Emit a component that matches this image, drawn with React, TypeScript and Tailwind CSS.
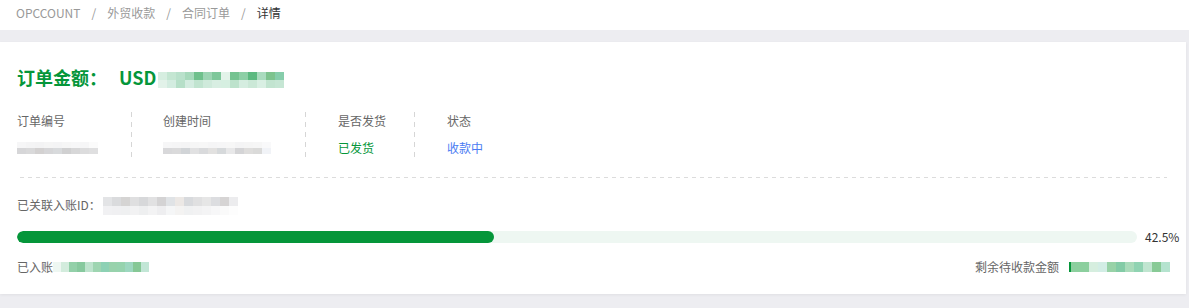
import React from 'react';

const Mosaic = ({ rows, cell = 9, h = 8 }: { rows: string[][]; cell?: number; h?: number }) => {
  return (
    <span className="inline-flex flex-col align-middle">
      {rows.map((row, i) => (
        <span key={i} className="flex">
          {row.map((c, j) => (
            <span key={j} style={{ background: c, width: cell, height: h }} />
          ))}
        </span>
      ))}
    </span>
  );
};

const greenTitle = [
  ['#d6eee0', '#c4e6d2', '#b9e1cb', '#a6d9bb', '#6fc08c', '#9cd4b3', '#7ec79a', '#e3f3e9', '#75c391', '#8dcfa6', '#5cb980', '#a9dbbe', '#7dc38e', '#86cdab'],
  ['#e2f2e9', '#d3ece0', '#b6dfc8', '#d3ece0', '#c1e4d0', '#cfeadb', '#d8eee2', '#d6efe1', '#bde2cc', '#d5ede0', '#cbe8d7', '#d9efe3', '#c2e4d0', '#c6e6d4'],
];

const grayA = [
  ['#f6f6f7', '#f4f4f5', '#f3f3f4', '#f5f5f5', '#f4f4f5', '#f6f6f6', '#f7f7f8', '#f6f6f7', '#fbfbfb'],
  ['#d6d6d8', '#d9d9da', '#d3d1d1', '#d6d6d8', '#d8dadc', '#d0d0d1', '#d7d7d8', '#dcdcdd', '#dfdfe0'],
];

const grayB = [
  ['#f6f6f7', '#f5f5f6', '#f4f4f5', '#f6f6f6', '#f7f7f7', '#f5f5f6', '#f6f6f7', '#f7f7f7', '#f4f4f5', '#f5f5f5', '#f6f6f6', '#f9f9fa'],
  ['#d8d8da', '#dadadb', '#d1d4d7', '#e1e1e2', '#d9dadc', '#e2e1e0', '#d6d9db', '#e8e8e9', '#d4d4d6', '#dedddc', '#dadad9', '#f1f3f7'],
];

const grayId = [
  ['#e3e4e6', '#dadbdd', '#d5d4d3', '#dfdfe0', '#d7d8da', '#e1e1e2', '#d4d3d4', '#e0e3e6', '#ece8e5', '#d8dadd', '#e0e0e1', '#e6e6e6', '#dcdde0', '#d6d4d4', '#ececee'],
  ['#f1f1f3', '#f0f0f2', '#eff0f1', '#f2f2f3', '#eeeff0', '#f3f3f4', '#eeeef0', '#f5f6f7', '#f4f3f2', '#f0f1f2', '#f2f2f3', '#f4f4f5', '#f7f7f8', '#fafafa', '#fdfdfd'],
];

const greenSmall = [
  ['#eef7f2', '#d3ecdd', '#93d0a9', '#87c99e', '#bde3cd', '#9ed5b1', '#8dd1b4', '#98d2ac', '#96d3ae', '#9dd7c0', '#86c896', '#c2e6d6'],
];

const greenRight = [
  ['#8ccf9e', '#8ccf9e', '#d6eedf', '#d2ede5', '#98d2a7', '#83cba6', '#a9dbba', '#90d3b2', '#c0e5d0', '#88ca96', '#b5e3cf'],
];

const vDash = 'w-px bg-[linear-gradient(to_bottom,#d6d6d6_50%,transparent_50%)] bg-[length:1px_10px]';

export default function App() {
  const font = { fontFamily: '"Noto Sans CJK SC", "Noto Sans", sans-serif' };
  return (
    <div className="w-[1189px] h-[308px] bg-[#ededf1] overflow-hidden text-[12px]" style={font}>
      <div className="h-[30px] bg-white flex items-start pt-[5px] pl-[16px] leading-[16px] text-[#999]">
        <span>OPCCOUNT</span>
        <span className="mx-[11px]">/</span>
        <span>外贸收款</span>
        <span className="mx-[11px]">/</span>
        <span>合同订单</span>
        <span className="mx-[11px]">/</span>
        <span className="text-[#333]">详情</span>
      </div>
      <div className="mt-[12px] w-[1186px] h-[252px] bg-white shadow-[0_1px_3px_rgba(0,0,0,0.06)] pt-[23px] pl-[17px] pr-[9px] pb-[18px]">
        <div className="flex items-center text-[18px] leading-[24px] font-bold text-[#05963a]">
          <span>订单金额：</span>
          <span className="ml-[12px]">USD</span>
          <span className="ml-[2px]">
            <Mosaic rows={greenTitle} cell={9} h={8} />
          </span>
        </div>

        <div className="flex mt-[23px] leading-[18px]">
          <div className="w-[114px] flex flex-col gap-[9px]">
            <span className="text-[#666]">订单编号</span>
            <span className="flex items-center h-[18px]">
              <Mosaic rows={grayA} cell={9} h={6} />
            </span>
          </div>
          <div className={vDash} />
          <div className="w-[173px] pl-[31px] flex flex-col gap-[9px]">
            <span className="text-[#666]">创建时间</span>
            <span className="flex items-center h-[18px]">
              <Mosaic rows={grayB} cell={9} h={6} />
            </span>
          </div>
          <div className={vDash} />
          <div className="w-[108px] pl-[32px] flex flex-col gap-[9px]">
            <span className="text-[#666]">是否发货</span>
            <span className="text-[#05963a]">已发货</span>
          </div>
          <div className={vDash} />
          <div className="pl-[32px] flex flex-col gap-[9px]">
            <span className="text-[#666]">状态</span>
            <span className="text-[#4b7cf3]">收款中</span>
          </div>
        </div>

        <div className="mt-[20px] ml-[3px] mr-[10px] h-px bg-[linear-gradient(to_right,#dcdcdc_50%,transparent_50%)] bg-[length:8px_1px]" />

        <div className="mt-[17px] flex items-center leading-[18px] text-[#666]">
          <span>已关联入账ID：</span>
          <span className="ml-[2px]">
            <Mosaic rows={grayId} cell={9} h={9} />
          </span>
        </div>

        <div className="mt-[16px] flex items-center">
          <div className="w-[1120px] shrink-0 h-[12px] rounded-full bg-[#eef7f2] overflow-hidden">
            <div className="h-full rounded-full bg-[#05963a]" style={{ width: '42.6%' }} />
          </div>
          <span className="ml-[8px] text-[#333] leading-[12px]">42.5%</span>
        </div>

        <div className="mt-[15px] mr-[7px] flex items-center justify-between leading-[18px] text-[#666]">
          <span className="flex items-center">
            <span>已入账</span>
            <Mosaic rows={greenSmall} cell={8} h={10} />
          </span>
          <span className="flex items-center">
            <span>剩余待收款金额</span>
            <span className="ml-[10px] flex items-center">
              <span className="w-[2px] h-[10px] bg-[#05963a]" />
              <Mosaic rows={greenRight} cell={9} h={10} />
            </span>
          </span>
        </div>
      </div>
    </div>
  );
}
